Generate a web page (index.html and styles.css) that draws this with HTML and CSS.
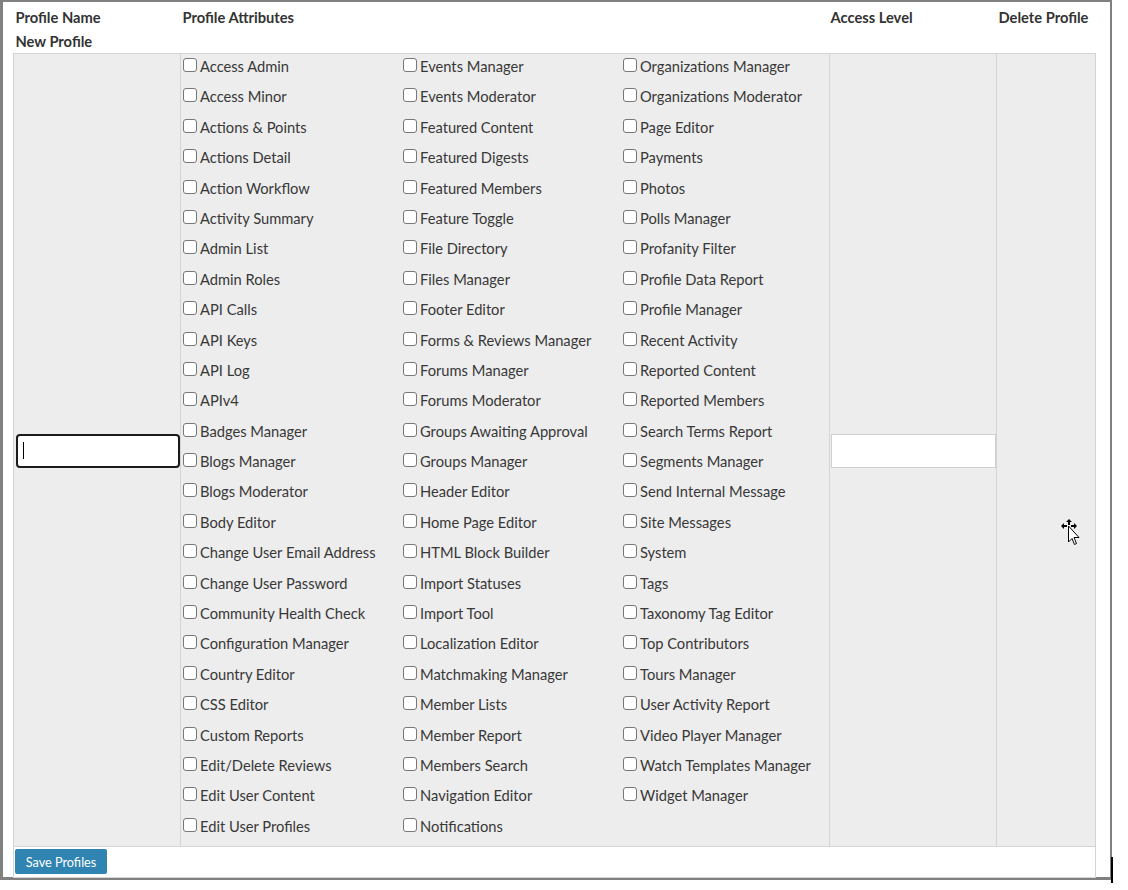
FILE: index.html
```html
<!DOCTYPE html>
<html lang="en">
<head>
    <meta charset="UTF-8">
    <meta name="viewport" content="width=device-width, initial-scale=1.0">
    <title>Profiles</title>
    <link rel="stylesheet" href="styles.css">
</head>
<body>

<!-- Profiles editor -->
<div class="profiles-box">
    <table class="profiles-table">
        <colgroup>
            <col class="col-name">
            <col class="col-attrs">
            <col class="col-level">
            <col class="col-delete">
        </colgroup>
        <tr class="head-row">
            <th>Profile Name</th>
            <th>Profile Attributes</th>
            <th>Access Level</th>
            <th>Delete Profile</th>
        </tr>
        <tr class="caption-row">
            <th colspan="4">New Profile</th>
        </tr>
        <tr class="profile-row">
            <td class="name-cell">
                <div class="name-wrap">
                    <input type="text" class="name-input">
                    <span class="caret"></span>
                </div>
            </td>
            <td class="attrs-cell">
                <div class="attr-grid">
                    <!-- Column 1 -->
                    <div class="attr-col">
                        <label class="attr"><input type="checkbox">Access Admin</label>
                        <label class="attr"><input type="checkbox">Access Minor</label>
                        <label class="attr"><input type="checkbox">Actions &amp; Points</label>
                        <label class="attr"><input type="checkbox">Actions Detail</label>
                        <label class="attr"><input type="checkbox">Action Workflow</label>
                        <label class="attr"><input type="checkbox">Activity Summary</label>
                        <label class="attr"><input type="checkbox">Admin List</label>
                        <label class="attr"><input type="checkbox">Admin Roles</label>
                        <label class="attr"><input type="checkbox">API Calls</label>
                        <label class="attr"><input type="checkbox">API Keys</label>
                        <label class="attr"><input type="checkbox">API Log</label>
                        <label class="attr"><input type="checkbox">APIv4</label>
                        <label class="attr"><input type="checkbox">Badges Manager</label>
                        <label class="attr"><input type="checkbox">Blogs Manager</label>
                        <label class="attr"><input type="checkbox">Blogs Moderator</label>
                        <label class="attr"><input type="checkbox">Body Editor</label>
                        <label class="attr"><input type="checkbox">Change User Email Address</label>
                        <label class="attr"><input type="checkbox">Change User Password</label>
                        <label class="attr"><input type="checkbox">Community Health Check</label>
                        <label class="attr"><input type="checkbox">Configuration Manager</label>
                        <label class="attr"><input type="checkbox">Country Editor</label>
                        <label class="attr"><input type="checkbox">CSS Editor</label>
                        <label class="attr"><input type="checkbox">Custom Reports</label>
                        <label class="attr"><input type="checkbox">Edit/Delete Reviews</label>
                        <label class="attr"><input type="checkbox">Edit User Content</label>
                        <label class="attr"><input type="checkbox">Edit User Profiles</label>
                    </div>
                    <!-- Column 2 -->
                    <div class="attr-col">
                        <label class="attr"><input type="checkbox">Events Manager</label>
                        <label class="attr"><input type="checkbox">Events Moderator</label>
                        <label class="attr"><input type="checkbox">Featured Content</label>
                        <label class="attr"><input type="checkbox">Featured Digests</label>
                        <label class="attr"><input type="checkbox">Featured Members</label>
                        <label class="attr"><input type="checkbox">Feature Toggle</label>
                        <label class="attr"><input type="checkbox">File Directory</label>
                        <label class="attr"><input type="checkbox">Files Manager</label>
                        <label class="attr"><input type="checkbox">Footer Editor</label>
                        <label class="attr"><input type="checkbox">Forms &amp; Reviews Manager</label>
                        <label class="attr"><input type="checkbox">Forums Manager</label>
                        <label class="attr"><input type="checkbox">Forums Moderator</label>
                        <label class="attr"><input type="checkbox">Groups Awaiting Approval</label>
                        <label class="attr"><input type="checkbox">Groups Manager</label>
                        <label class="attr"><input type="checkbox">Header Editor</label>
                        <label class="attr"><input type="checkbox">Home Page Editor</label>
                        <label class="attr"><input type="checkbox">HTML Block Builder</label>
                        <label class="attr"><input type="checkbox">Import Statuses</label>
                        <label class="attr"><input type="checkbox">Import Tool</label>
                        <label class="attr"><input type="checkbox">Localization Editor</label>
                        <label class="attr"><input type="checkbox">Matchmaking Manager</label>
                        <label class="attr"><input type="checkbox">Member Lists</label>
                        <label class="attr"><input type="checkbox">Member Report</label>
                        <label class="attr"><input type="checkbox">Members Search</label>
                        <label class="attr"><input type="checkbox">Navigation Editor</label>
                        <label class="attr"><input type="checkbox">Notifications</label>
                    </div>
                    <!-- Column 3 -->
                    <div class="attr-col">
                        <label class="attr"><input type="checkbox">Organizations Manager</label>
                        <label class="attr"><input type="checkbox">Organizations Moderator</label>
                        <label class="attr"><input type="checkbox">Page Editor</label>
                        <label class="attr"><input type="checkbox">Payments</label>
                        <label class="attr"><input type="checkbox">Photos</label>
                        <label class="attr"><input type="checkbox">Polls Manager</label>
                        <label class="attr"><input type="checkbox">Profanity Filter</label>
                        <label class="attr"><input type="checkbox">Profile Data Report</label>
                        <label class="attr"><input type="checkbox">Profile Manager</label>
                        <label class="attr"><input type="checkbox">Recent Activity</label>
                        <label class="attr"><input type="checkbox">Reported Content</label>
                        <label class="attr"><input type="checkbox">Reported Members</label>
                        <label class="attr"><input type="checkbox">Search Terms Report</label>
                        <label class="attr"><input type="checkbox">Segments Manager</label>
                        <label class="attr"><input type="checkbox">Send Internal Message</label>
                        <label class="attr"><input type="checkbox">Site Messages</label>
                        <label class="attr"><input type="checkbox">System</label>
                        <label class="attr"><input type="checkbox">Tags</label>
                        <label class="attr"><input type="checkbox">Taxonomy Tag Editor</label>
                        <label class="attr"><input type="checkbox">Top Contributors</label>
                        <label class="attr"><input type="checkbox">Tours Manager</label>
                        <label class="attr"><input type="checkbox">User Activity Report</label>
                        <label class="attr"><input type="checkbox">Video Player Manager</label>
                        <label class="attr"><input type="checkbox">Watch Templates Manager</label>
                        <label class="attr"><input type="checkbox">Widget Manager</label>
                    </div>
                </div>
            </td>
            <td class="level-cell">
                <input type="text" class="level-input">
            </td>
            <td class="delete-cell"></td>
        </tr>
        <tr class="save-row">
            <td colspan="4">
                <button class="save-btn">Save Profiles</button>
            </td>
        </tr>
    </table>
</div>

<!-- mouse pointer (move) -->
<svg class="move-cursor" width="24" height="32" viewBox="0 0 24 32">
    <path d="M8 1 L11 4 L9 4 L9 7 L7 7 L7 4 L5 4 Z" fill="#000"/>
    <path d="M0 8 L3 5 L3 7 L6 7 L6 9 L3 9 L3 11 Z" fill="#000"/>
    <path d="M16 8 L13 5 L13 7 L10 7 L10 9 L13 9 L13 11 Z" fill="#000"/>
    <path d="M7.5 8 L7.5 24 L11 20.5 L13.5 26.5 L15.5 25.5 L13 19.5 L18 19.5 Z" fill="#fff" stroke="#000" stroke-width="1"/>
</svg>
<div class="edge-mark"></div>

</body>
</html>
```

FILE: styles.css
```css
* {
    box-sizing: border-box;
}
body {
    margin: 0;
    padding: 0;
    background-color: #ffffff;
    font-family: Lato, "Open Sans", sans-serif;
    font-size: 14.7px;
    color: #333333;
}

/* Outer frame */
.profiles-box {
    width: 1112px;
    height: 880px;
    margin: 0;
    border: 3px solid #808080;
    border-top-width: 2px;
    border-right-width: 2px;
    padding: 0 14px 0 10px;
}

/* Table */
.profiles-table {
    width: 1082px;
    border-collapse: collapse;
    table-layout: fixed;
}
.col-name { width: 167px; }
.col-attrs { width: 649px; }
.col-level { width: 167px; }
.col-delete { width: 99px; }

.head-row th,
.caption-row th {
    text-align: left;
    font-weight: 700;
    line-height: 17px;
    padding: 7px 2px 0;
    color: #333;
}
.head-row th:nth-child(3) {
    padding-left: 1px;
}
.caption-row th {
    padding: 7px 2px 3px;
}

.profile-row td {
    background-color: #ededed;
    border: 1px solid #d4d4d4;
    padding: 1px 1px 0;
    vertical-align: middle;
}
.profile-row td.attrs-cell {
    vertical-align: top;
    padding: 2px 0 0 2px;
}

/* Name input (focused) */
.name-wrap {
    position: relative;
}
.name-input {
    display: block;
    width: 164px;
    height: 34px;
    border: 2px solid #1b1b1b;
    border-radius: 4px;
    background: #fff;
    outline: none;
    margin: 0 0 0 1px;
}
.caret {
    position: absolute;
    left: 8px;
    top: 8px;
    width: 1px;
    height: 17px;
    background: #000;
}

/* Access level input */
.level-input {
    display: block;
    width: 165px;
    height: 34px;
    border: 1px solid #d0d0d0;
    background: #fff;
    margin: 0;
}

/* Attribute checkboxes */
.attr-grid {
    display: grid;
    grid-template-columns: 220px 220px 1fr;
}
.attr {
    display: flex;
    align-items: center;
    height: 20px;
    margin-bottom: 10.4px;
    white-space: nowrap;
    color: #383838;
    line-height: 20px;
}
.attr input {
    appearance: none;
    -webkit-appearance: none;
    width: 14px;
    height: 14px;
    margin: -2px 3px 0 0;
    border: 1px solid #777;
    border-radius: 3px;
    background: #fff;
    flex: none;
}

/* Save row */
.save-row td {
    background: #fff;
    border: 1px solid #d4d4d4;
    padding: 1px 0 2px 1px;
    height: 31px;
}
.save-btn {
    display: block;
    width: 92px;
    height: 25px;
    border: none;
    border-radius: 2px;
    background-color: #2f84b1;
    color: #ffffff;
    font-family: Lato, "Open Sans", sans-serif;
    font-size: 12.7px;
    padding: 0;
    cursor: pointer;
}

/* Pointer drawn over the delete column */
.move-cursor {
    position: absolute;
    left: 1061px;
    top: 518px;
}
.edge-mark {
    position: absolute;
    left: 1111px;
    top: 857px;
    width: 2px;
    height: 26px;
    background: #000;
}
```
